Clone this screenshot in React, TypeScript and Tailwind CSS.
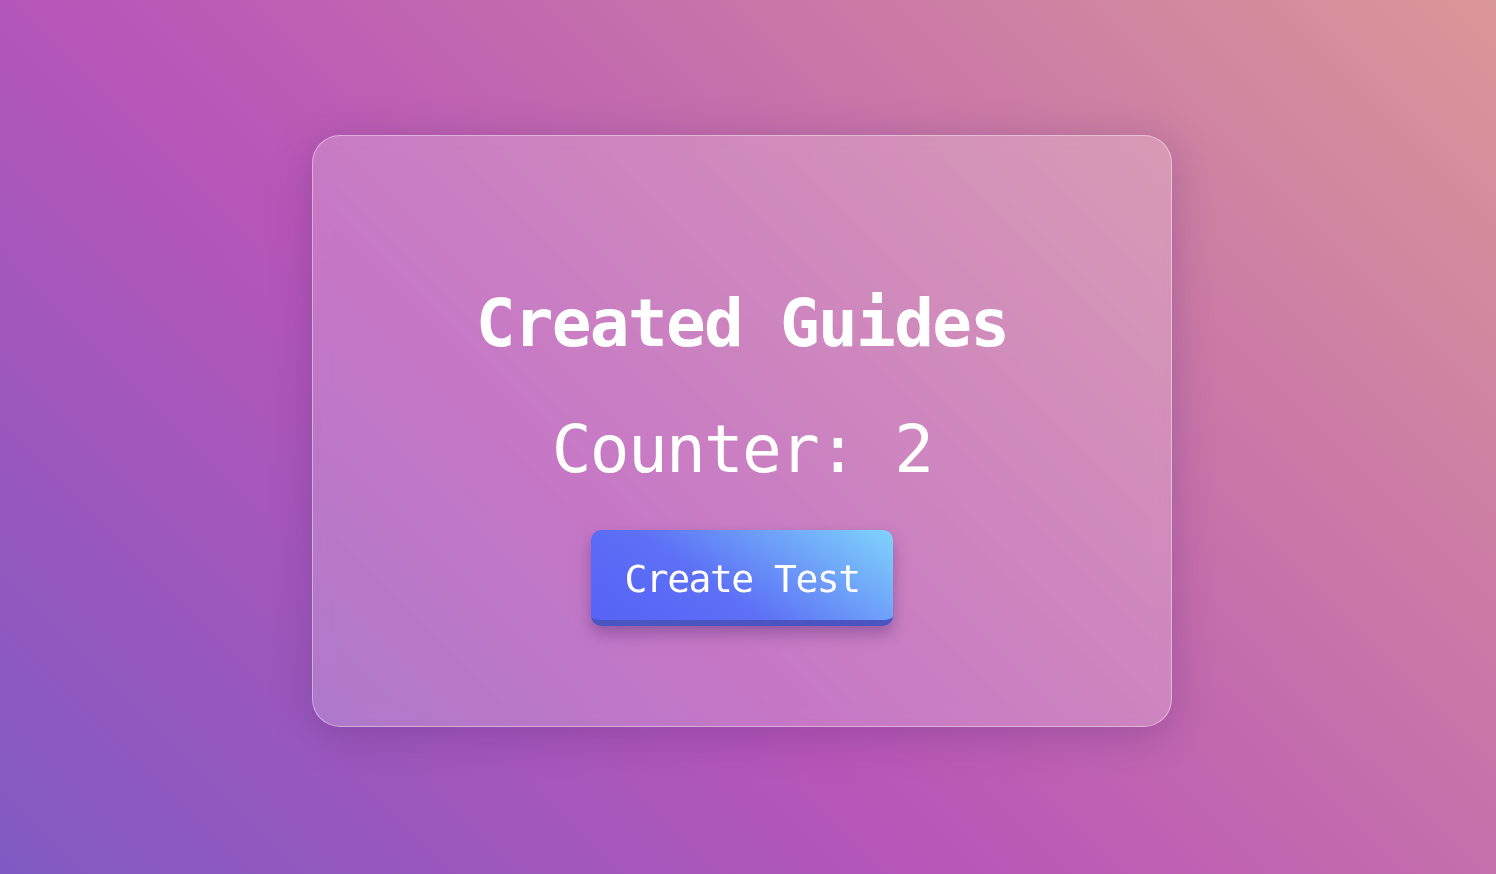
export default function App() {
  const mono = "font-['DejaVu_Sans_Mono','Liberation_Mono',monospace]";

  return (
    <div className="min-h-screen w-full flex items-center justify-center bg-[linear-gradient(45deg,#7f5ac2_0%,#b856b8_40%,#da9797_100%)]">
      {/* Glass card */}
      <div className="mr-[12px] mb-[12px] w-[860px] h-[592px] rounded-[28px] border border-white/40 bg-white/20 backdrop-blur-sm shadow-[0_8px_40px_rgba(70,30,110,0.28)] flex flex-col items-center pt-[155px]">
        <h1 className={`${mono} text-[66px] leading-none font-bold tracking-[-1.7px] text-white`}>
          Created Guides
        </h1>
        <p className={`${mono} mt-[60px] text-[66px] leading-none tracking-[-1.7px] text-white`}>
          Counter: 2
        </p>
        <button
          type="button"
          className={`${mono} mt-[47px] w-[302px] pt-[30px] pb-[22px] rounded-[10px] border-b-[6px] border-[#4b55c2] bg-[linear-gradient(35deg,#5662f5_0%,#5d70f6_40%,#7fd4fb_100%)] text-[38px] leading-none tracking-[-1.5px] text-white shadow-[0_8px_16px_rgba(60,30,100,0.35)]`}
        >
          Create Test
        </button>
      </div>
    </div>
  );
}
